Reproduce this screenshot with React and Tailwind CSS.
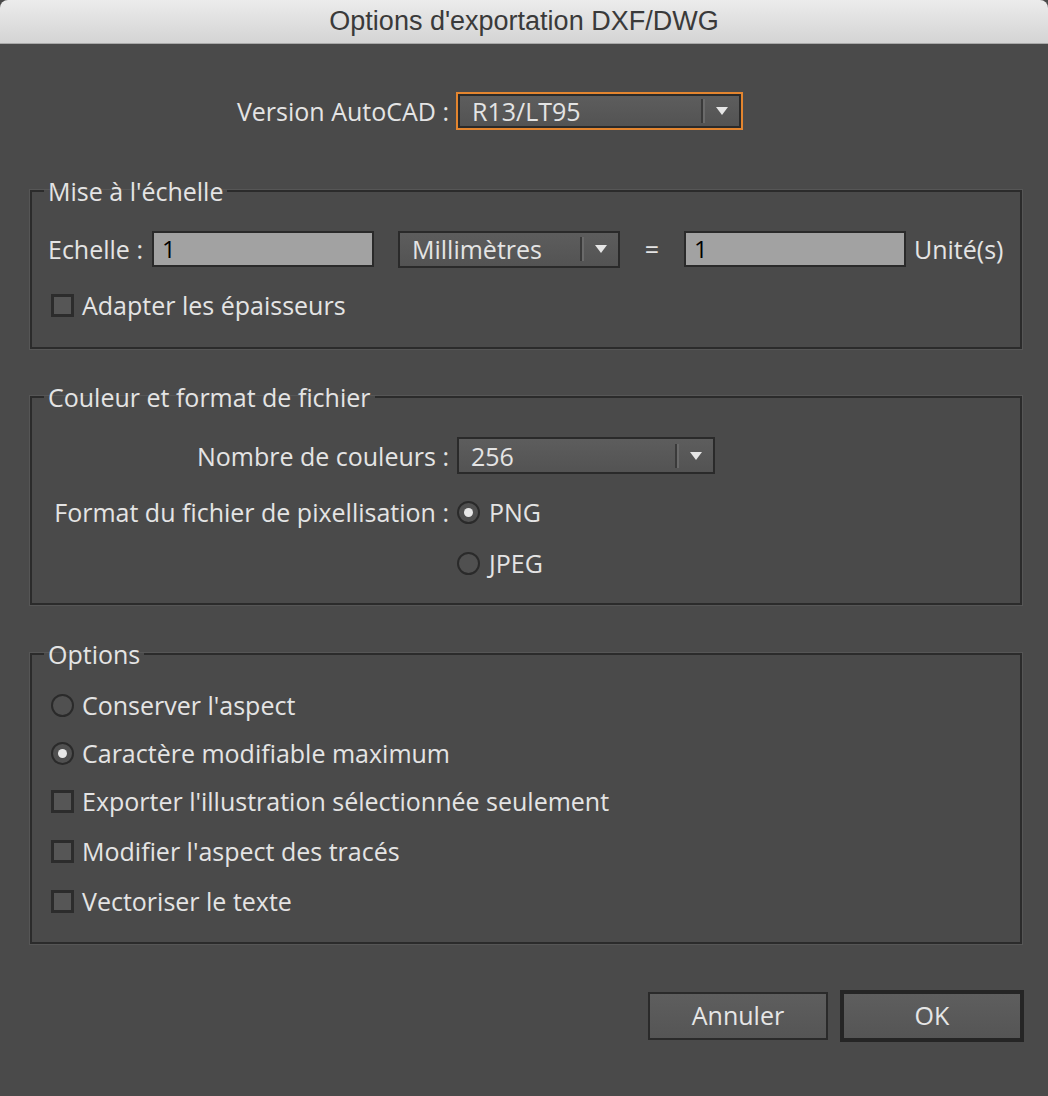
import React from "react";

const LABEL = "text-[#e4e4e4] text-[25px] leading-[28px]";

function Arrow() {
  return (
    <svg width="14" height="10" viewBox="0 0 14 10" className="block">
      <polygon points="1,1 13,1 7,9" fill="#e6e6e6" />
    </svg>
  );
}

function Dropdown({ text, className = "", height = "h-[37px]" }) {
  return (
    <div
      className={`flex items-center border-2 border-[#2a2a2a] bg-gradient-to-b from-[#5d5d5d] to-[#535353] ${height} ${className}`}
    >
      <span className={`flex-1 pl-[12px] ${LABEL}`}>{text}</span>
      <div className="flex h-[24px]">
        <div className="w-[2px] bg-[#3a3a3a]" />
        <div className="w-[2px] bg-[#6a6a6a]" />
      </div>
      <div className="w-[34px] flex justify-center">
        <Arrow />
      </div>
    </div>
  );
}

function Input({ className = "" }) {
  return (
    <div
      className={`h-[36px] border-2 border-[#2a2a2a] bg-[#a2a2a2] flex items-center pl-[8px] text-black text-[24px] ${className}`}
    >
      1
    </div>
  );
}

function Checkbox() {
  return (
    <div className="w-[23px] h-[23px] border-[3px] border-[#2c2c2c] bg-[#565656] shrink-0" />
  );
}

function Radio({ checked }) {
  return (
    <div className="w-[23px] h-[23px] rounded-full border-2 border-[#2a2a2a] bg-[#505050] shrink-0 flex items-center justify-center">
      {checked && <div className="w-[9px] h-[9px] rounded-full bg-[#e8e8e8]" />}
    </div>
  );
}

function Group({ title, className = "", children }) {
  return (
    <fieldset
      className={`border-2 border-[#2b2b2b] shadow-[0_0_0_1px_#565656] ${className}`}
    >
      <legend className={`ml-[12px] px-[4px] ${LABEL}`}>{title}</legend>
      {children}
    </fieldset>
  );
}

function Row({ control, label, className = "" }) {
  return (
    <div className={`flex items-center h-[30px] pl-[19px] ${className}`}>
      {control}
      <span className={`ml-[8px] ${LABEL}`}>{label}</span>
    </div>
  );
}

export default function App() {
  return (
    <div
      className="w-[1048px] h-[1096px] bg-[#4a4a4a] overflow-hidden"
      style={{ fontFamily: "'Open Sans', Lato, sans-serif" }}
    >
      {/* Title bar */}
      <div className="h-[44px] bg-gradient-to-b from-[#ececec] to-[#d4d4d4] border-b border-[#a9a9a9] rounded-t-[8px] flex items-center justify-center">
        <span
          className="text-[27px] text-[#3a3a3a]"
          style={{ fontFamily: "'Liberation Sans', Arial, sans-serif" }}
        >
          Options d'exportation DXF/DWG
        </span>
      </div>

      {/* Version row */}
      <div className="flex items-center mt-[48px]">
        <span className={`w-[449px] text-right ${LABEL}`}>Version AutoCAD :</span>
        <div className="ml-[7px] border-2 border-[#e3852f] w-[287px]">
          <Dropdown text="R13/LT95" height="h-[34px]" />
        </div>
      </div>

      <div className="pl-[30px] pr-[26px]">
        {/* Mise à l'échelle */}
        <Group title="Mise à l'échelle" className="mt-[47px] pb-[27px]">
          <div className="flex items-center h-[38px] mt-[25px] pl-[16px]">
            <span className={`w-[104px] shrink-0 whitespace-nowrap ${LABEL}`}>Echelle :</span>
            <Input className="w-[222px]" />
            <Dropdown text="Millimètres" className="ml-[24px] w-[222px]" />
            <span className={`w-[64px] text-center ${LABEL}`}>=</span>
            <Input className="w-[222px]" />
            <span className={`ml-[8px] whitespace-nowrap ${LABEL}`}>Unité(s)</span>
          </div>
          <Row control={<Checkbox />} label="Adapter les épaisseurs" className="mt-[22px]" />
        </Group>

        {/* Couleur et format */}
        <Group title="Couleur et format de fichier" className="mt-[34px] pb-[25px]">
          <div className="grid grid-cols-[401px_1fr] gap-x-[8px] pl-[16px]">
            <div className={`h-[37px] mt-[26px] flex items-center justify-end ${LABEL}`}>
              Nombre de couleurs :
            </div>
            <div className="mt-[26px]">
              <Dropdown text="256" className="w-[258px]" />
            </div>
            <div className={`h-[30px] mt-[23px] flex items-center justify-end whitespace-nowrap ${LABEL}`}>
              Format du fichier de pixellisation :
            </div>
            <div className="h-[30px] mt-[23px] flex items-center">
              <Radio checked />
              <span className={`ml-[9px] ${LABEL}`}>PNG</span>
            </div>
            <div />
            <div className="h-[30px] mt-[21px] flex items-center">
              <Radio />
              <span className={`ml-[9px] ${LABEL}`}>JPEG</span>
            </div>
          </div>
        </Group>

        {/* Options */}
        <Group title="Options" className="mt-[35px] pb-[26px]">
          <Row control={<Radio />} label="Conserver l'aspect" className="mt-[22px]" />
          <Row control={<Radio checked />} label="Caractère modifiable maximum" className="mt-[18px]" />
          <Row control={<Checkbox />} label="Exporter l'illustration sélectionnée seulement" className="mt-[18px]" />
          <Row control={<Checkbox />} label="Modifier l'aspect des tracés" className="mt-[20px]" />
          <Row control={<Checkbox />} label="Vectoriser le texte" className="mt-[20px]" />
        </Group>
      </div>

      {/* Buttons */}
      <div className="flex justify-end items-center mt-[46px] pr-[24px] gap-[12px]">
        <button className="w-[180px] h-[48px] border-2 border-[#2a2a2a] bg-gradient-to-b from-[#5e5e5e] to-[#555] text-[#e6e6e6] text-[25px]">
          Annuler
        </button>
        <button className="w-[184px] h-[52px] border-4 border-[#252525] bg-gradient-to-b from-[#5e5e5e] to-[#555] text-[#e6e6e6] text-[25px]">
          OK
        </button>
      </div>
    </div>
  );
}
